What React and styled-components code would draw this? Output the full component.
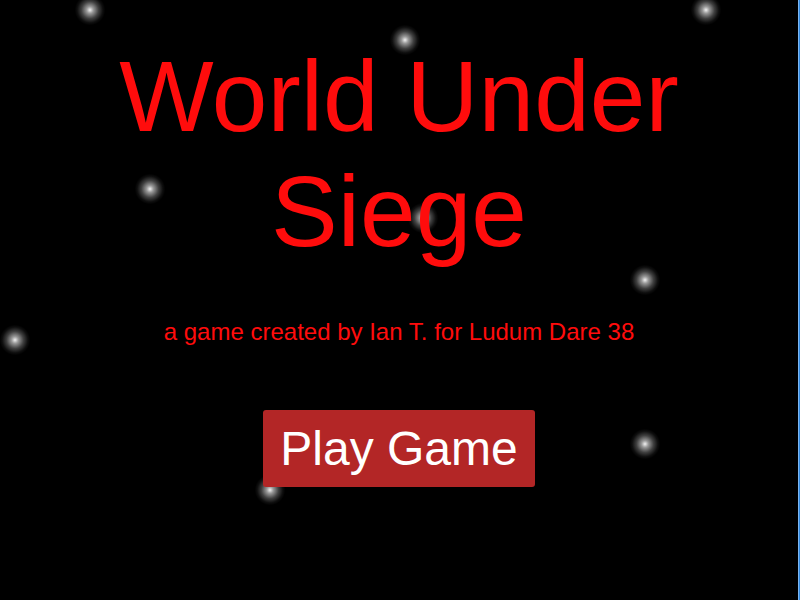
import React from "react";
import styled, { createGlobalStyle } from "styled-components";

const GlobalStyle = createGlobalStyle`
  html, body {
    margin: 0;
    padding: 0;
    background: #000;
    overflow: hidden;
  }
  #root {
    width: 800px;
    height: 600px;
  }
`;

const Frame = styled.div`
  display: flex;
  width: 800px;
  height: 600px;
`;

const Stage = styled.main`
  position: relative;
  flex: 1;
  height: 100%;
  background: #000;
  overflow: hidden;
`;

const ScrollEdge = styled.div`
  width: 2px;
  height: 100%;
  background: linear-gradient(90deg, #7fb6ee 0 1px, #2f88e0 1px 2px);
`;

/* soft glowing star sprite on the night-sky canvas */
const Star = styled.span`
  position: absolute;
  width: 30px;
  height: 30px;
  margin: -15px 0 0 -15px;
  background: radial-gradient(
    circle,
    rgba(255, 255, 255, 0.95) 0%,
    rgba(255, 255, 255, 0.6) 16%,
    rgba(255, 255, 255, 0.25) 40%,
    rgba(255, 255, 255, 0.06) 60%,
    rgba(255, 255, 255, 0) 72%
  );
  z-index: 0;
`;

const Menu = styled.div`
  position: relative;
  z-index: 1;
  display: flex;
  flex-direction: column;
  align-items: center;
  padding-top: 39px;
  font-family: "Liberation Sans", Arial, sans-serif;
`;

const Title = styled.h1`
  margin: 0;
  font-size: 100px;
  font-weight: 400;
  line-height: 115px;
  color: #ff0c0c;
  text-align: center;
`;

const Credit = styled.p`
  margin: 49px 0 0;
  font-size: 24px;
  line-height: 28px;
  color: #ff0c0c;
`;

const PlayButton = styled.button`
  margin-top: 64px;
  padding: 11px 17px;
  border: none;
  border-radius: 3px;
  background: #b32626;
  color: #fff;
  font-family: "Liberation Sans", Arial, sans-serif;
  font-size: 48px;
  line-height: 55px;
  cursor: pointer;
`;

const stars = [
  [90, 10],
  [405, 40],
  [706, 10],
  [150, 189],
  [423, 218],
  [645, 280],
  [15, 340],
  [645, 444],
  [270, 490],
];

export default function App() {
  return (
    <>
      <GlobalStyle />
      <Frame>
        <Stage>
          {stars.map(([x, y], i) => (
            <Star key={i} style={{ left: x, top: y }} />
          ))}
          <Menu>
            <Title>World Under Siege</Title>
            <Credit>a game created by Ian T. for Ludum Dare 38</Credit>
            <PlayButton>Play Game</PlayButton>
          </Menu>
        </Stage>
        <ScrollEdge />
      </Frame>
    </>
  );
}
